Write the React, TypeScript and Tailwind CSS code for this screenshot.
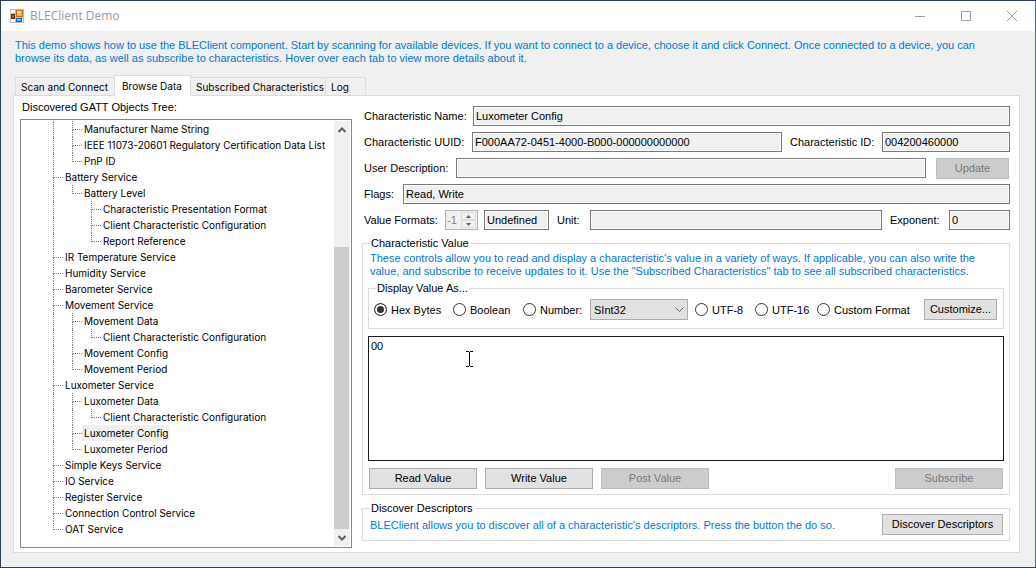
import { useState } from "react";
import type { ReactNode } from "react";

type TreeNode = {
  label: string;
  children?: TreeNode[];
};

type TreeRow = {
  label: string;
  guides: boolean[];
  isLast: boolean;
};

const deviceInfoNodes: TreeNode[] = [
  { label: "Manufacturer Name String" },
  { label: "IEEE 11073-20601 Regulatory Certification Data List" },
  { label: "PnP ID" }
];

const serviceNodes: TreeNode[] = [
  {
    label: "Battery Service",
    children: [
      {
        label: "Battery Level",
        children: [
          { label: "Characteristic Presentation Format" },
          { label: "Client Characteristic Configuration" },
          { label: "Report Reference" }
        ]
      }
    ]
  },
  { label: "IR Temperature Service" },
  { label: "Humidity Service" },
  { label: "Barometer Service" },
  {
    label: "Movement Service",
    children: [
      { label: "Movement Data", children: [{ label: "Client Characteristic Configuration" }] },
      { label: "Movement Config" },
      { label: "Movement Period" }
    ]
  },
  {
    label: "Luxometer Service",
    children: [
      { label: "Luxometer Data", children: [{ label: "Client Characteristic Configuration" }] },
      { label: "Luxometer Config" },
      { label: "Luxometer Period" }
    ]
  },
  { label: "Simple Keys Service" },
  { label: "IO Service" },
  { label: "Register Service" },
  { label: "Connection Control Service" },
  { label: "OAT Service" }
];

function flatten(nodes: TreeNode[], guides: boolean[] = []): TreeRow[] {
  return nodes.flatMap((node, index) => {
    const isLast = index === nodes.length - 1;
    return [{ label: node.label, guides, isLast }, ...flatten(node.children ?? [], [...guides, !isLast])];
  });
}

// The list is scrolled, so the first rows belong to a service above the fold.
const rows = [...flatten(deviceInfoNodes, [true]), ...flatten(serviceNodes)];

const tabs = [
  { label: "Scan and Connect", width: "min-w-[100px]" },
  { label: "Browse Data", width: "min-w-[77px]" },
  { label: "Subscribed Characteristics", width: "min-w-[136px]" },
  { label: "Log", width: "min-w-[41px]" }
];

function AppIcon() {
  return (
    <svg aria-hidden="true" className="h-[14px] w-[14px]" viewBox="0 0 14 14">
      <rect fill="#bdbdbd" height="14" width="14" />
      <path d="M1 1h4v3H1zM1 10h4v3H1zM12 10h1v3h-1z" fill="#ffffff" />
      <rect fill="#f6b14a" height="6" stroke="#b8701c" width="6" x="6.5" y="1.5" />
      <path d="M7 2h4v2H7z" fill="#ffdc9a" />
      <rect fill="#b5561f" height="4" stroke="#6e2c10" width="3" x="1.5" y="5.5" />
      <rect fill="#4fa3ee" height="3" stroke="#1f66b4" width="5" x="6.5" y="9.5" />
      <path d="M7 10h3v1H7z" fill="#a9d5fa" />
    </svg>
  );
}

function TitleBar() {
  return (
    <header className="flex h-[30px] items-center bg-white pl-[9px]">
      <AppIcon />
      <h1 className="ml-1.5 flex-1 font-['Open_Sans',sans-serif] text-[12px] text-[#9c9c94]">BLEClient Demo</h1>
      <button aria-label="Minimize" className="flex h-full w-[46px] items-center justify-center text-[#9c9c90]" type="button">
        <svg className="h-[10px] w-[10px]" fill="none" stroke="currentColor" viewBox="0 0 10 10">
          <path d="M0 5.5h10" />
        </svg>
      </button>
      <button aria-label="Maximize" className="flex h-full w-[46px] items-center justify-center text-[#9c9c90]" type="button">
        <svg className="h-[10px] w-[10px]" fill="none" stroke="currentColor" viewBox="0 0 10 10">
          <path d="M0.5 0.5h9v9h-9z" />
        </svg>
      </button>
      <button aria-label="Close" className="flex h-full w-[46px] items-center justify-center text-[#9c9c90]" type="button">
        <svg className="h-[10px] w-[10px]" fill="none" stroke="currentColor" viewBox="0 0 10 10">
          <path d="M0 0l10 10M10 0L0 10" />
        </svg>
      </button>
    </header>
  );
}

function TreeItem({ row, selected, onSelect }: { row: TreeRow; selected: boolean; onSelect: () => void }) {
  return (
    <li className="flex h-4">
      {row.guides.map((open, index) => (
        <span className={open ? "w-[19px] shrink-0 border-l border-dotted border-[#808080]" : "w-[19px] shrink-0"} key={index} />
      ))}
      <span className="flex w-[10px] shrink-0 flex-col">
        <span className="h-[9px] border-b border-l border-dotted border-[#808080]" />
        {row.isLast ? null : <span className="h-[7px] border-l border-dotted border-[#808080]" />}
      </span>
      <button className={selected ? "bg-[#f0f0f0] px-0.5 whitespace-nowrap" : "px-0.5 whitespace-nowrap"} onClick={onSelect} type="button">
        {row.label}
      </button>
    </li>
  );
}

function ScrollBar() {
  return (
    <div className="flex w-4 shrink-0 flex-col bg-[#f0f0f0]">
      <button aria-label="Scroll up" className="flex h-[17px] items-center justify-center text-[#606060]" type="button">
        <svg className="h-2 w-2" fill="none" stroke="currentColor" strokeWidth="2" viewBox="0 0 8 8">
          <path d="M0.5 6L4 2.5 7.5 6" />
        </svg>
      </button>
      <div className="flex-[109]" />
      <div className="mr-px flex-[282] bg-[#cdcdcd]" />
      <button aria-label="Scroll down" className="flex h-[17px] items-center justify-center text-[#606060]" type="button">
        <svg className="h-2 w-2" fill="none" stroke="currentColor" strokeWidth="2" viewBox="0 0 8 8">
          <path d="M0.5 2L4 5.5 7.5 2" />
        </svg>
      </button>
    </div>
  );
}

function GattTree() {
  const [selected, setSelected] = useState("Luxometer Config");

  return (
    <section className="flex w-[332px] shrink-0 flex-col">
      <h2 className="mb-1 pl-0.5">Discovered GATT Objects Tree:</h2>
      <div className="flex flex-1 border border-[#828790] py-px pr-px">
        <ul className="min-w-0 flex-1 overflow-hidden pl-8 font-[Inter,sans-serif] text-[10px] leading-4">
          {rows.map((row, index) => (
            <TreeItem key={index} onSelect={() => setSelected(row.label)} row={row} selected={row.label === selected} />
          ))}
        </ul>
        <ScrollBar />
      </div>
    </section>
  );
}

function ReadOnlyBox({ id, label, value, className }: { id: string; label?: string; value: string; className: string }) {
  return (
    <input
      aria-label={label}
      className={`h-5 min-w-0 border border-[#7a7a7a] bg-[#f0f0f0] px-0.5 shadow-[inset_0_0_0_1px_#ffffff] outline-none ${className}`}
      id={id}
      readOnly
      type="text"
      value={value}
    />
  );
}

function PushButton({ children, className, disabled }: { children: ReactNode; className: string; disabled?: boolean }) {
  return (
    <button
      className={`h-[21px] shrink-0 border border-[#adadad] bg-[#e1e1e1] pb-px disabled:border-[#bfbfbf] disabled:bg-[#cccccc] disabled:text-[#7a7a7a] ${className}`}
      disabled={disabled}
      type="button"
    >
      {children}
    </button>
  );
}

function CharacteristicFields() {
  return (
    <div className="flex flex-col gap-1.5 pl-0.5">
      <div className="flex items-center">
        <label className="w-[109px]" htmlFor="char-name">Characteristic Name:</label>
        <ReadOnlyBox className="flex-1" id="char-name" value="Luxometer Config" />
      </div>
      <div className="flex items-center">
        <label className="w-[108px]" htmlFor="char-uuid">Characteristic UUID:</label>
        <ReadOnlyBox className="flex-1" id="char-uuid" value="F000AA72-0451-4000-B000-000000000000" />
        <label className="w-[100px] pl-2" htmlFor="char-id">Characteristic ID:</label>
        <ReadOnlyBox className="w-32" id="char-id" value="004200460000" />
      </div>
      <div className="flex h-5 items-center">
        <label className="w-[92px]" htmlFor="user-desc">User Description:</label>
        <ReadOnlyBox className="flex-1" id="user-desc" value="" />
        <PushButton className="mr-px ml-2.5 w-[73px]" disabled>Update</PushButton>
      </div>
      <div className="flex items-center">
        <label className="w-[39px]" htmlFor="flags">Flags:</label>
        <ReadOnlyBox className="flex-1" id="flags" value="Read, Write" />
      </div>
      <div className="flex items-center">
        <label className="w-[81px]" htmlFor="value-format">Value Formats:</label>
        <div className="flex h-5 w-[33px] border border-[#b4b4b4] bg-[#f0f0f0] p-px">
          <input className="w-[14px] text-[#808080] outline-none" disabled id="value-format" type="text" value="-1" />
          <div className="flex flex-1 flex-col text-[#606060]">
            <button aria-label="Increase" className="flex flex-1 items-center justify-center border border-[#dcdcdc]" disabled type="button">
              <svg className="h-[3px] w-[5px]" fill="currentColor" viewBox="0 0 5 3">
                <path d="M0 3L2.5 0 5 3z" />
              </svg>
            </button>
            <button aria-label="Decrease" className="flex flex-1 items-center justify-center border border-[#dcdcdc]" disabled type="button">
              <svg className="h-[3px] w-[5px]" fill="currentColor" viewBox="0 0 5 3">
                <path d="M0 0L2.5 3 5 0z" />
              </svg>
            </button>
          </div>
        </div>
        <ReadOnlyBox className="ml-1.5 w-[65px]" id="format-name" label="Format name" value="Undefined" />
        <label className="w-[41px] pl-2" htmlFor="unit">Unit:</label>
        <ReadOnlyBox className="flex-1" id="unit" value="" />
        <label className="w-[67px] pl-2" htmlFor="exponent">Exponent:</label>
        <ReadOnlyBox className="w-[61px]" id="exponent" value="0" />
      </div>
    </div>
  );
}

function DisplayOption({ label, className, checked, onChange }: { label: string; className: string; checked: boolean; onChange: () => void }) {
  return (
    <label className={`flex shrink-0 items-center gap-1 whitespace-nowrap ${className}`}>
      <input
        checked={checked}
        className="h-[13px] w-[13px] appearance-none rounded-full border border-[#333333] bg-white checked:bg-[#333333] checked:shadow-[inset_0_0_0_2px_#ffffff]"
        name="display-as"
        onChange={onChange}
        type="radio"
      />
      {label}
    </label>
  );
}

function DisplayValueAs() {
  const [format, setFormat] = useState("Hex Bytes");

  return (
    <fieldset className="h-[47px] border border-[#dcdcdc] pr-1.5 pl-[5px]">
      <legend className="ml-0.5 px-px leading-[13px]">Display Value As...</legend>
      <div className="mt-1 flex h-[21px] items-center">
        <DisplayOption checked={format === "Hex Bytes"} className="w-[79px]" label="Hex Bytes" onChange={() => setFormat("Hex Bytes")} />
        <DisplayOption checked={format === "Boolean"} className="w-[70px]" label="Boolean" onChange={() => setFormat("Boolean")} />
        <DisplayOption checked={format === "Number:"} className="w-[67px]" label="Number:" onChange={() => setFormat("Number:")} />
        <div className="grid w-[98px] shrink-0 items-center">
          <select
            aria-label="Number type"
            className="col-start-1 row-start-1 h-[21px] appearance-none border border-[#adadad] bg-[#e1e1e1] pl-[3px]"
            defaultValue="SInt32"
          >
            <option>SInt32</option>
            <option>UInt32</option>
          </select>
          <svg aria-hidden="true" className="pointer-events-none col-start-1 row-start-1 mr-1 h-[5px] w-[9px] justify-self-end" fill="none" stroke="#606060" viewBox="0 0 9 5">
            <path d="M0.5 0.5l4 4 4-4" />
          </svg>
        </div>
        <DisplayOption checked={format === "UTF-8"} className="ml-[7px] w-[60px]" label="UTF-8" onChange={() => setFormat("UTF-8")} />
        <DisplayOption checked={format === "UTF-16"} className="w-[62px]" label="UTF-16" onChange={() => setFormat("UTF-16")} />
        <DisplayOption checked={format === "Custom Format"} className="flex-1" label="Custom Format" onChange={() => setFormat("Custom Format")} />
        <PushButton className="w-[73px]">Customize...</PushButton>
      </div>
    </fieldset>
  );
}

function TextCursor() {
  return (
    <svg aria-hidden="true" className="pointer-events-none absolute top-[15px] left-[98px] h-4 w-[7px]" fill="none" stroke="#000000" viewBox="0 0 7 16">
      <path d="M0 0.5h3M4 0.5h3M0 15.5h3M4 15.5h3M3.5 1v14" />
    </svg>
  );
}

function CharacteristicValue() {
  return (
    <fieldset className="mt-[7px] flex flex-1 flex-col border border-[#dcdcdc] px-[5px] pb-[5px]">
      <legend className="ml-0.5 px-px leading-[13px]">Characteristic Value</legend>
      <p className="mt-0.5 px-0.5 leading-[13px] text-[#0078d7]">
        These controls allow you to read and display a characteristic's value in a variety of ways. If applicable, you can also write the value, and
        subscribe to receive updates to it. Use the "Subscribed Characteristics" tab to see all subscribed characteristics.
      </p>
      <div className="mt-1">
        <DisplayValueAs />
      </div>
      <div className="relative mt-[7px] flex flex-1">
        <textarea
          aria-label="Characteristic value"
          className="min-h-[125px] flex-1 resize-none border border-[#1a1a1a] bg-white px-0.5 py-[3px] leading-[13px] outline-none"
          defaultValue="00"
        />
        <TextCursor />
      </div>
      <div className="mt-[7px] flex gap-2 px-px">
        <PushButton className="w-[108px]">Read Value</PushButton>
        <PushButton className="w-[108px]">Write Value</PushButton>
        <PushButton className="w-[108px]" disabled>Post Value</PushButton>
        <PushButton className="ml-auto w-[108px]" disabled>Subscribe</PushButton>
      </div>
    </fieldset>
  );
}

function DiscoverDescriptors() {
  return (
    <fieldset className="mt-[7px] h-[39px] border border-[#dcdcdc] pr-1.5 pl-[7px]">
      <legend className="px-px leading-[13px]">Discover Descriptors</legend>
      <div className="flex h-[19px] items-center justify-between">
        <p className="text-[#0078d7]">BLEClient allows you to discover all of a characteristic's descriptors. Press the button the do so.</p>
        <PushButton className="w-[121px]">Discover Descriptors</PushButton>
      </div>
    </fieldset>
  );
}

export default function App() {
  const [activeTab, setActiveTab] = useState("Browse Data");

  return (
    <div className="flex min-h-screen flex-col border border-[#2b3f5c] border-r-[#2f78a8] bg-[#f0f0ef] font-['Liberation_Sans',Arial,sans-serif] text-[11px] leading-4 text-black">
      <TitleBar />
      <p className="mt-2 pr-10 pl-3.5 leading-[13px] text-[#0078d7]">
        This demo shows how to use the BLEClient component. Start by scanning for available devices. If you want to connect to a device, choose it and
        click Connect. Once connected to a device, you can browse its data, as well as subscribe to characteristics. Hover over each tab to view more
        details about it.
      </p>
      <main className="mt-2.5 flex flex-1 flex-col pr-[15px] pb-3.5 pl-3">
        <div className="-mb-px flex items-end pl-[3px] font-[Inter,sans-serif] text-[10px] leading-4" role="tablist">
          {tabs.map((tab) => (
            <button
              aria-selected={tab.label === activeTab}
              className={
                tab.label === activeTab
                  ? `z-10 -ml-px h-[21px] border border-b-0 border-[#dcdcdc] bg-white px-[7px] text-left whitespace-nowrap ${tab.width}`
                  : `-ml-px h-[19px] border border-[#dcdcdc] pl-[5px] text-left whitespace-nowrap ${tab.width}`
              }
              key={tab.label}
              onClick={() => setActiveTab(tab.label)}
              role="tab"
              type="button"
            >
              {tab.label}
            </button>
          ))}
        </div>
        <div className="flex flex-1 border border-[#dcdcdc] bg-white pt-[3px] pr-[9px] pb-1 pl-1.5" role="tabpanel">
          <GattTree />
          <div className="ml-2.5 flex min-w-0 flex-1 flex-col pt-[7px] pb-[7px]">
            <CharacteristicFields />
            <CharacteristicValue />
            <DiscoverDescriptors />
          </div>
        </div>
      </main>
    </div>
  );
}
